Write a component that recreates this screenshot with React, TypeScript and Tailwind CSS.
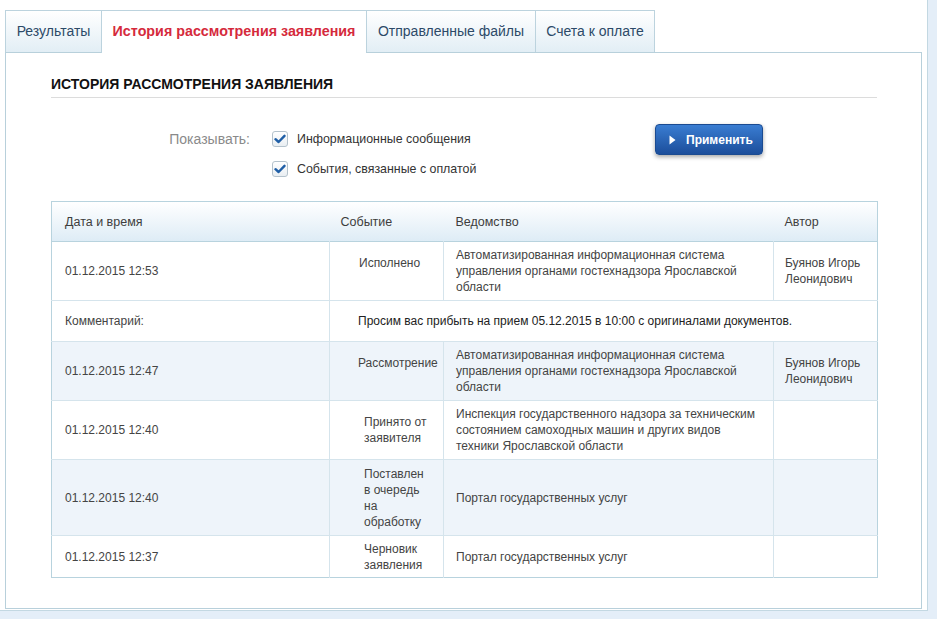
import React from "react";

type Row = {
  date: string;
  event: string[];
  evMl: string;
  dept: string[];
  author: string[];
  h: string;
  blue: boolean;
};

const rows: Row[] = [
  {
    date: "01.12.2015 12:53",
    event: ["Исполнено", "\u00a0"],
    evMl: "ml-[29px]",
    dept: [
      "Автоматизированная информационная система",
      "управления органами гостехнадзора Ярославской",
      "области",
    ],
    author: ["Буянов Игорь", "Леонидович"],
    h: "h-[59px]",
    blue: false,
  },
];

const rows2: Row[] = [
  {
    date: "01.12.2015 12:47",
    event: ["Рассмотрение", "\u00a0"],
    evMl: "ml-[28px]",
    dept: [
      "Автоматизированная информационная система",
      "управления органами гостехнадзора Ярославской",
      "области",
    ],
    author: ["Буянов Игорь", "Леонидович"],
    h: "h-[59px]",
    blue: true,
  },
  {
    date: "01.12.2015 12:40",
    event: ["Принято от", "заявителя"],
    evMl: "ml-[34px]",
    dept: [
      "Инспекция государственного надзора за техническим",
      "состоянием самоходных машин и других видов",
      "техники Ярославской области",
    ],
    author: [],
    h: "h-[59px]",
    blue: false,
  },
  {
    date: "01.12.2015 12:40",
    event: ["Поставлен", "в очередь", "на", "обработку"],
    evMl: "ml-[34px]",
    dept: ["Портал государственных услуг"],
    author: [],
    h: "h-[76px]",
    blue: true,
  },
  {
    date: "01.12.2015 12:37",
    event: ["Черновик", "заявления"],
    evMl: "ml-[34px]",
    dept: ["Портал государственных услуг"],
    author: [],
    h: "h-[42px]",
    blue: false,
  },
];

function Lines({ lines }: { lines: string[] }) {
  return (
    <>
      {lines.map((l, i) => (
        <div key={i} className="whitespace-nowrap">
          {l}
        </div>
      ))}
    </>
  );
}

function DataRow({ r }: { r: Row }) {
  return (
    <tr className={`${r.h} ${r.blue ? "bg-[#eef4fa]" : "bg-white"} border-t border-[#d5e4ec]`}>
      <td className="pl-[13px] align-middle border-r border-[#d5e4ec]">{r.date}</td>
      <td className="align-middle border-r border-[#d5e4ec] p-0">
        <div className={r.evMl}>
          <Lines lines={r.event} />
        </div>
      </td>
      <td className="pl-[12px] align-middle border-r border-[#d5e4ec]">
        <Lines lines={r.dept} />
      </td>
      <td className="pl-[11px] align-middle">
        <Lines lines={r.author} />
      </td>
    </tr>
  );
}

function Check() {
  return (
    <div className="w-[16px] h-[16px] rounded-[3px] border border-[#b4c2cc] bg-gradient-to-b from-white to-[#e9eef2] flex items-center justify-center">
      <svg width="12" height="10" viewBox="0 0 12 10">
        <path d="M1.5 5.2 L4.6 8 L10.5 1.8" fill="none" stroke="#1f5ea6" strokeWidth="2.4" strokeLinecap="round" strokeLinejoin="round" />
      </svg>
    </div>
  );
}

export default function App() {
  const tabBase =
    "h-[42px] flex items-center justify-center whitespace-nowrap border-t border-l border-[#bcd3de]";
  const inactive = "bg-gradient-to-b from-white to-[#e2eef5] text-[#2c4a68] text-[14px]";
  return (
    <div
      className="w-[937px] h-[619px] bg-[#e4eef8] overflow-hidden"
      style={{ fontFamily: '"Liberation Sans", Arial, sans-serif' }}
    >
      <div className="w-[928px] h-[611px] bg-white border-r border-b border-[#c3d8e2] pl-[5px] pt-[10px]">
        <div className="flex items-end">
          <div className={`${tabBase} ${inactive} w-[96px]`}>Результаты</div>
          <div className={`${tabBase} bg-white text-[#d52a3c] text-[14.3px] font-bold relative z-10 h-[43px] -mb-px pb-px w-[265px]`}>
            История рассмотрения заявления
          </div>
          <div className={`${tabBase} ${inactive} w-[169px]`}>Отправленные файлы</div>
          <div className={`${tabBase} ${inactive} w-[120px] border-r`}>Счета к оплате</div>
        </div>
        <div className="w-[917px] h-[557px] border border-[#b8d0db] px-[45px]">
          <div className="pt-[23px] pb-[5px] border-b border-[#dcdcdc] w-[826px] text-[14px] leading-[16px] font-bold text-[#111]">
            ИСТОРИЯ РАССМОТРЕНИЯ ЗАЯВЛЕНИЯ
          </div>
          <div className="flex items-start mt-[26px]">
            <div className="w-[199px] text-right pt-[6px] text-[14px] leading-[18px] text-[#8a8a8a]">
              Показывать:
            </div>
            <div className="ml-[22px] w-[383px] pt-[7px] flex flex-col gap-[14px]">
              <div className="flex items-center h-[16px]">
                <Check />
                <span className="ml-[9px] text-[12.4px] leading-[16px] text-[#333]">Информационные сообщения</span>
              </div>
              <div className="flex items-center h-[16px]">
                <Check />
                <span className="ml-[9px] text-[12.4px] leading-[16px] text-[#333]">События, связанные с оплатой</span>
              </div>
            </div>
            <button className="w-[108px] h-[31px] rounded-[4px] border border-[#1b4b91] bg-gradient-to-b from-[#3a7dd2] to-[#1c4e9b] shadow-[0_2px_4px_rgba(0,0,0,0.35)] flex items-center pl-[13px] text-white text-[12px] font-bold">
              <svg width="7" height="10" viewBox="0 0 7 10" className="mr-[10px]">
                <path d="M0.5 0.5 L6.5 5 L0.5 9.5 Z" fill="white" />
              </svg>
              Применить
            </button>
          </div>
          <table className="mt-[24px] w-[826px] table-fixed border-collapse border border-[#b8d3de] text-[12px] leading-[16px] text-[#444]">
            <colgroup>
              <col className="w-[278px]" />
              <col className="w-[114px]" />
              <col className="w-[330px]" />
              <col className="w-[104px]" />
            </colgroup>
            <thead>
              <tr className="h-[40px] bg-gradient-to-b from-white to-[#deecf6] border-b border-[#b8d3de] text-[#3d3d3d]">
                <th className="text-left font-normal pl-[13px] text-[12.5px]">Дата и время</th>
                <th className="text-left font-normal pl-[11px] text-[12.5px]">Событие</th>
                <th className="text-left font-normal pl-[12px] text-[12.5px]">Ведомство</th>
                <th className="text-left font-normal pl-[11px] text-[12.5px]">Автор</th>
              </tr>
            </thead>
            <tbody>
              {rows.map((r, i) => (
                <DataRow key={i} r={r} />
              ))}
              <tr className="h-[41px] bg-white border-t border-[#d5e4ec]">
                <td className="pl-[13px] align-middle border-r border-[#d5e4ec]">Комментарий:</td>
                <td colSpan={3} className="pl-[28px] align-middle text-[#222]">
                  Просим вас прибыть на прием 05.12.2015 в 10:00 с оригиналами документов.
                </td>
              </tr>
              {rows2.map((r, i) => (
                <DataRow key={i} r={r} />
              ))}
            </tbody>
          </table>
        </div>
      </div>
    </div>
  );
}
